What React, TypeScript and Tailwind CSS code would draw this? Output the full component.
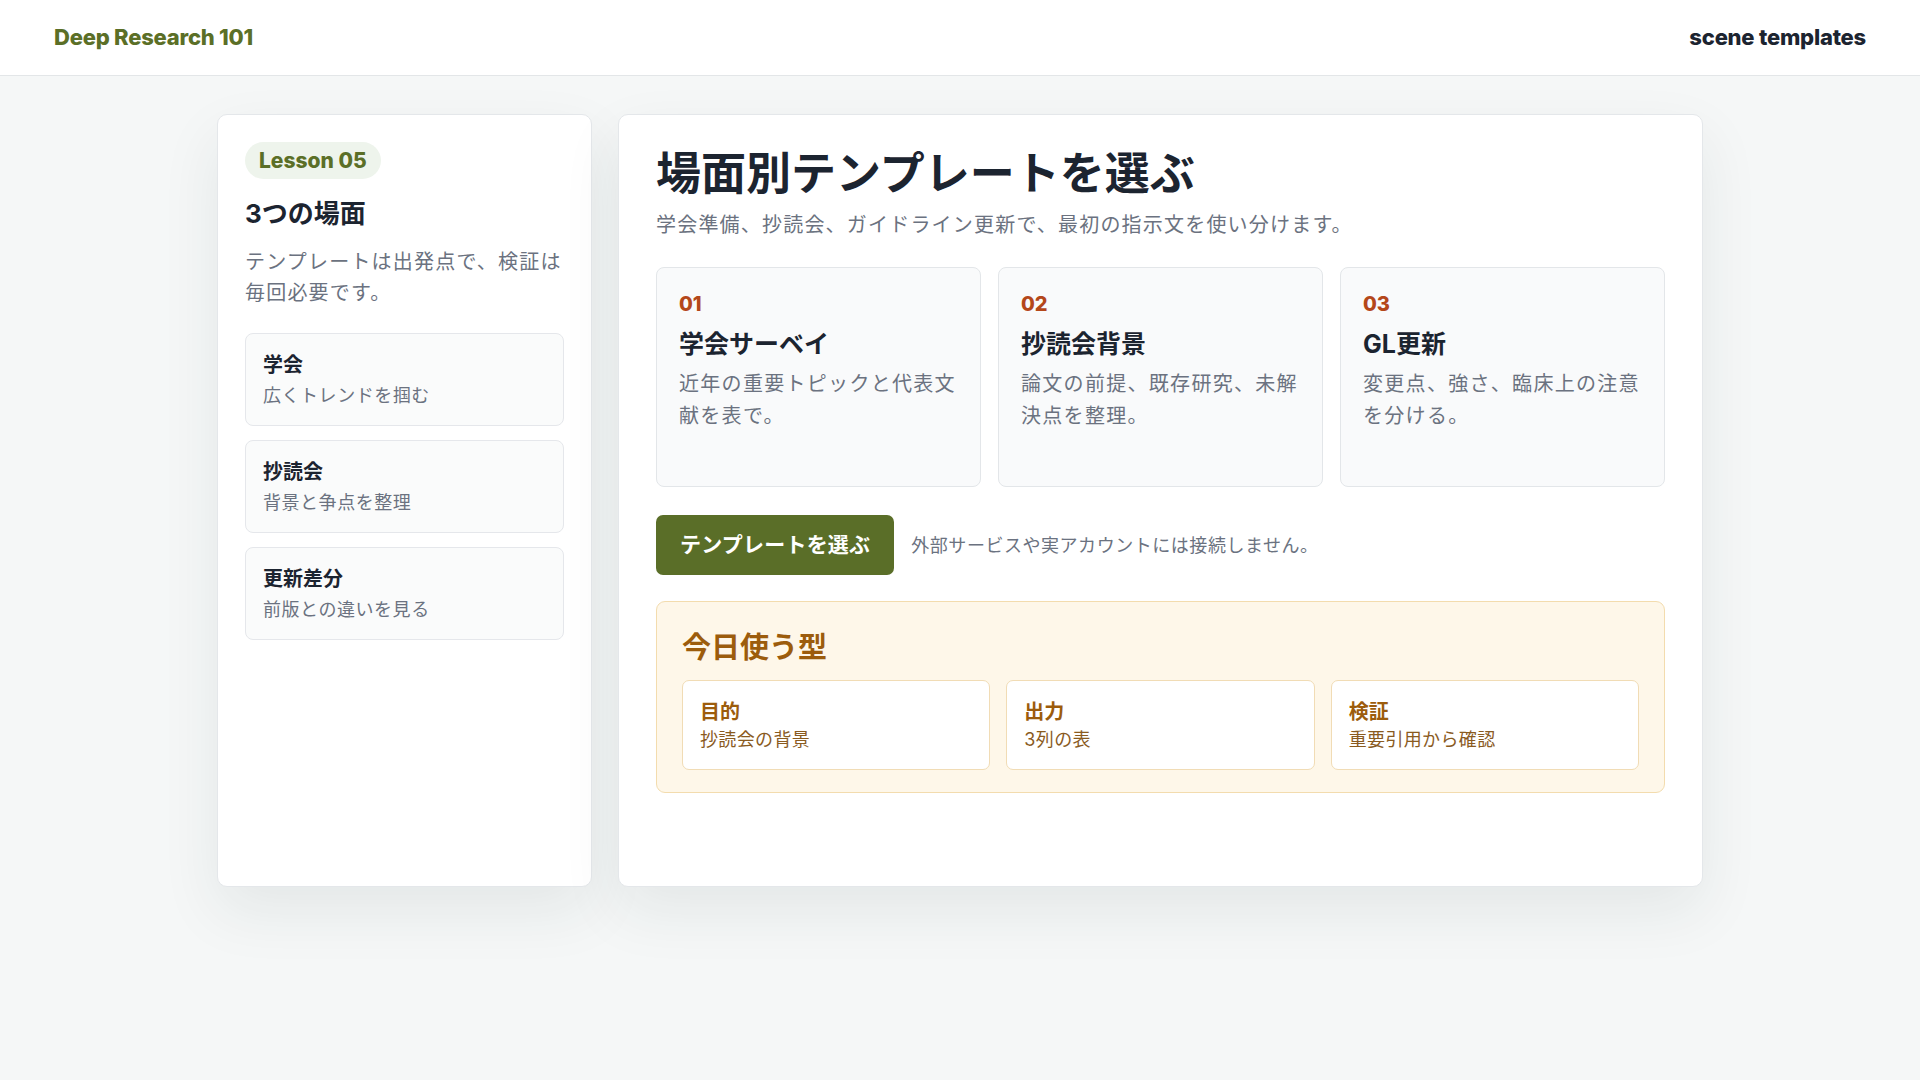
import React from 'react';

const scenes = [
    { title: '学会', sub: '広くトレンドを掴む' },
    { title: '抄読会', sub: '背景と争点を整理' },
    { title: '更新差分', sub: '前版との違いを見る' },
];

const templates = [
    { no: '01', title: '学会サーベイ', desc: '近年の重要トピックと代表文献を表で。' },
    { no: '02', title: '抄読会背景', desc: '論文の前提、既存研究、未解決点を整理。' },
    { no: '03', title: 'GL更新', desc: '変更点、強さ、臨床上の注意を分ける。' },
];

const today = [
    { label: '目的', value: '抄読会の背景' },
    { label: '出力', value: '3列の表' },
    { label: '検証', value: '重要引用から確認' },
];

export default function App() {
    return (
        <div className="min-h-screen w-full bg-[#f5f7f7] text-[#1f2630] [font-family:Inter,'Noto_Sans_CJK_JP',sans-serif]">
            {/* ヘッダー */}
            <header className="h-[76px] bg-white border-b border-[#e3e6e8] flex items-center justify-between px-[54px]">
                <div className="text-[22px] font-extrabold tracking-[-0.01em] text-[#5b6f27]">Deep Research 101</div>
                <div className="text-[22px] font-extrabold tracking-[-0.01em] text-[#1c2430]">scene templates</div>
            </header>

            <main className="w-[1486px] mx-auto pt-[38px] grid grid-cols-[375px_1fr] gap-[26px]">
                {/* 左カラム */}
                <aside className="h-[773px] bg-white border border-[#e4e7ea] rounded-[10px] shadow-[0_24px_60px_rgba(30,45,50,0.08)] p-[27px] flex flex-col">
                    <div className="self-start h-[37px] px-[14px] rounded-full bg-[#eef4ec] text-[#5b6f27] text-[21px] font-extrabold flex items-center">
                        Lesson 05
                    </div>
                    <h2 className="mt-[17px] text-[26px] font-bold leading-[36px] text-[#1c2430]">3つの場面</h2>
                    <p className="mt-[15px] text-[20px] leading-[31px] text-[#6b7280] tracking-[0.06em]">
                        テンプレートは出発点で、検証は毎回必要です。
                    </p>
                    <div className="mt-[24px] flex flex-col gap-[14px]">
                        {scenes.map((s) => (
                            <div key={s.title} className="h-[93px] rounded-[8px] border border-[#e5e7eb] bg-[#fafbfb] px-[17px] pt-[17px]">
                                <div className="text-[20px] font-bold leading-[28px] text-[#1c2430]">{s.title}</div>
                                <div className="mt-[4px] text-[18px] leading-[26px] text-[#6b7280] tracking-[0.03em]">{s.sub}</div>
                            </div>
                        ))}
                    </div>
                </aside>

                {/* メイン */}
                <section className="h-[773px] bg-white border border-[#e4e7ea] rounded-[10px] shadow-[0_24px_60px_rgba(30,45,50,0.08)] px-[37px] pt-[29px]">
                    <h1 className="text-[45px] font-bold leading-[60px] text-[#1c2430]">場面別テンプレートを選ぶ</h1>
                    <p className="mt-[6px] text-[20px] leading-[30px] text-[#6b7280] tracking-[0.06em]">
                        学会準備、抄読会、ガイドライン更新で、最初の指示文を使い分けます。
                    </p>

                    <div className="mt-[27px] grid grid-cols-3 gap-[17px]">
                        {templates.map((t) => (
                            <div key={t.no} className="h-[220px] rounded-[8px] border border-[#e3e6e9] bg-[#f9fafb] px-[22px] pt-[23px]">
                                <div className="text-[20px] font-extrabold leading-[26px] text-[#b4471a]">{t.no}</div>
                                <div className="mt-[11px] text-[25px] font-bold leading-[32px] text-[#1c2430]">{t.title}</div>
                                <p className="mt-[8px] text-[20px] leading-[32px] text-[#6b7280] tracking-[0.065em]">{t.desc}</p>
                            </div>
                        ))}
                    </div>

                    <div className="mt-[28px] flex items-center gap-[17px]">
                        <button className="h-[60px] px-[24px] rounded-[7px] bg-[#5a6e28] text-white text-[21px] font-bold tracking-[0.01em]">
                            テンプレートを選ぶ
                        </button>
                        <span className="text-[18px] text-[#6b7280] tracking-[0.03em]">外部サービスや実アカウントには接続しません。</span>
                    </div>

                    <div className="mt-[26px] rounded-[9px] border border-[#f3dcae] bg-[#fef7e9] px-[25px] pt-[27px] pb-[22px]">
                        <h3 className="text-[29px] font-bold leading-[38px] text-[#9c5c0c]">今日使う型</h3>
                        <div className="mt-[13px] grid grid-cols-3 gap-[16px]">
                            {today.map((d) => (
                                <div key={d.label} className="h-[90px] rounded-[7px] border border-[#f1dcb5] bg-white px-[17px] pt-[17px]">
                                    <div className="text-[20px] font-bold leading-[28px] text-[#9c5c0c]">{d.label}</div>
                                    <div className="mt-[1px] text-[18px] leading-[26px] text-[#8a5b1f] tracking-[0.02em]">{d.value}</div>
                                </div>
                            ))}
                        </div>
                    </div>
                </section>
            </main>
        </div>
    );
}
